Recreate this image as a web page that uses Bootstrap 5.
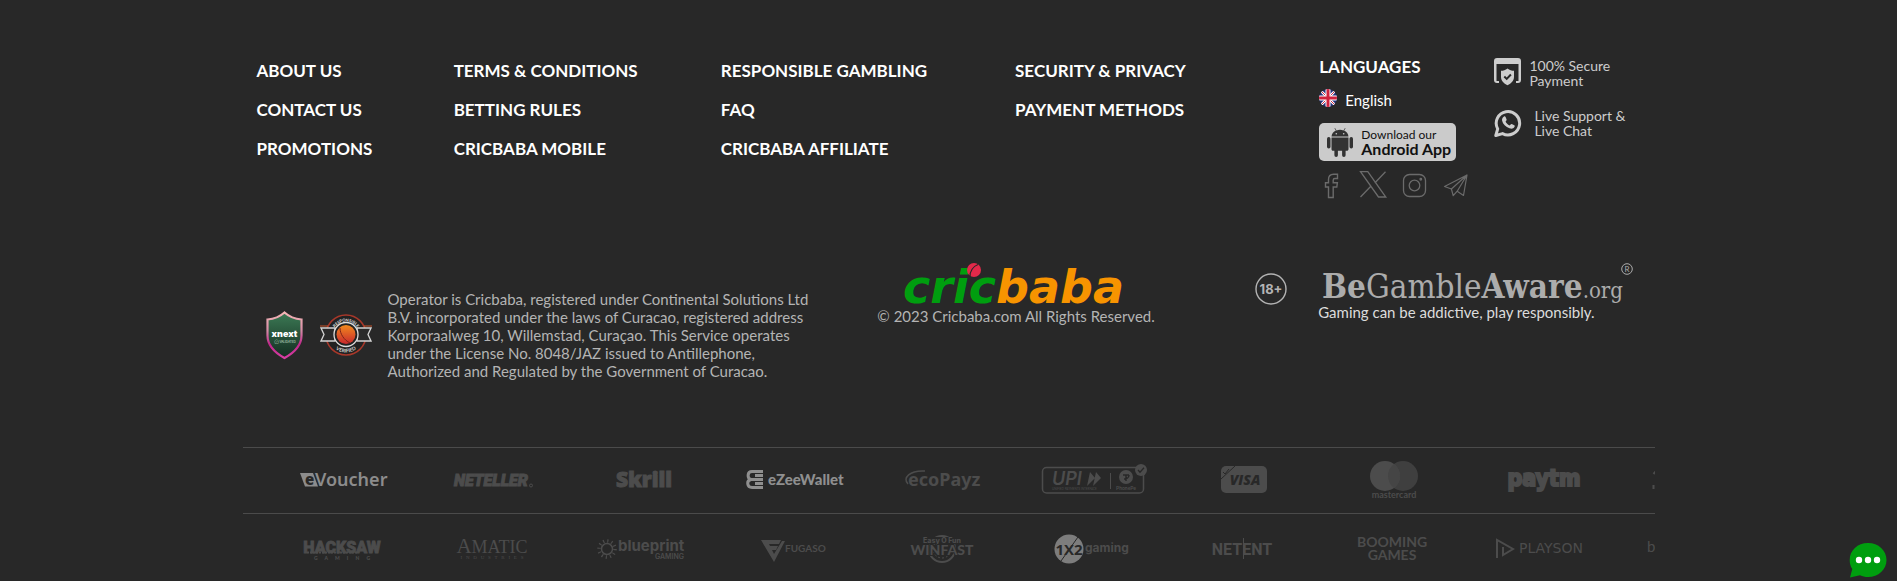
<!DOCTYPE html>
<html lang="en">
<head>
<meta charset="utf-8">
<meta name="viewport" content="width=device-width, initial-scale=1">
<title>Cricbaba</title>
<link href="https://cdn.jsdelivr.net/npm/bootstrap@5.3.0/dist/css/bootstrap.min.css" rel="stylesheet">
<style>
  body { background: #282828; color: #b4b4b4; font-family: Lato, "Open Sans", sans-serif; font-size: 15px; line-height: 18px; }
  a { color: inherit; text-decoration: none; }
  a:hover { color: #f79400; }
  .site-footer { max-width: 1412px; }
  .footer-top { display: grid; grid-template-columns: 197fr 267fr 294fr 304fr 175fr 146fr; padding: 51px 14px 0; }
  .footer-links { color: #fff; font-size: 17px; font-weight: 700; line-height: 39px; }
  .lang-title { color: #fff; font-size: 17px; font-weight: 700; line-height: 32px; }
  .lang-btn { color: #fff; font-size: 15px; line-height: 20px; margin-top: 6px; }
  .app-btn { background: #cbcbcb; color: #111; border-radius: 5px; width: 137px; height: 38px; margin-top: 12px; }
  .app-btn small { font: 12px/12px Lato, sans-serif; }
  .app-btn strong { font: 700 16px/15px Lato, sans-serif; }
  .social { color: #6b6b6b; margin-top: 9px; }
  .perks { color: #cdcdcd; font-size: 14px; line-height: 15px; padding-top: 7px; }
  .perk-chat { margin-top: 20px; }
  .footer-mid { display: grid; grid-template-columns: 563fr 392fr 428fr; padding: 0 14px; margin-top: 63px; }
  .licence { padding: 27px 0 0 8px; }
  .licence p { width: 430px; }
  .aware { padding-left: 42px; gap: 30px; }
  .aware-note { color: #dcdcdc; }
  .logo-strip { border-top: 1px solid #4b4b4b; padding-left: 26px; color: #4c4c4c; height: 66px; }
  .logo-strip svg { flex: 0 0 150px; }
  .strip-first { margin-top: 67px; }
  .chat-btn { right: 10px; bottom: 3px; }
  .f-open { font-family: "Open Sans", sans-serif; }
  .f-noto { font-family: "Noto Sans", sans-serif; }
  .f-inter { font-family: Inter, sans-serif; }
  .f-lato { font-family: Lato, sans-serif; }
  .f-roboto { font-family: Roboto, sans-serif; }
  .f-dejavu { font-family: "DejaVu Sans", sans-serif; }
  .f-cond { font-family: "DejaVu Sans Condensed", "DejaVu Sans", sans-serif; }
  .f-slab { font-family: "DejaVu Serif Condensed", "DejaVu Serif", serif; }
  .f-serif { font-family: "Liberation Serif", serif; }
</style>
</head>
<body>
<footer class="site-footer mx-auto">

  <div class="footer-top">
    <ul class="footer-links list-unstyled mb-0">
      <li><a href="#">ABOUT US</a></li>
      <li><a href="#">CONTACT US</a></li>
      <li><a href="#">PROMOTIONS</a></li>
    </ul>
    <ul class="footer-links list-unstyled mb-0">
      <li><a href="#">TERMS &amp; CONDITIONS</a></li>
      <li><a href="#">BETTING RULES</a></li>
      <li><a href="#">CRICBABA MOBILE</a></li>
    </ul>
    <ul class="footer-links list-unstyled mb-0">
      <li><a href="#">RESPONSIBLE GAMBLING</a></li>
      <li><a href="#">FAQ</a></li>
      <li><a href="#">CRICBABA AFFILIATE</a></li>
    </ul>
    <ul class="footer-links list-unstyled mb-0">
      <li><a href="#">SECURITY &amp; PRIVACY</a></li>
      <li><a href="#">PAYMENT METHODS</a></li>
    </ul>

    <div>
      <div class="lang-title">LANGUAGES</div>
      <button type="button" class="lang-btn btn p-0 border-0 d-flex align-items-center">
        <svg width="18" height="18" viewBox="0 0 18 18" class="me-2 mb-1" aria-hidden="true">
          <clipPath id="round"><circle cx="9" cy="9" r="9"/></clipPath>
          <g clip-path="url(#round)">
            <path fill="#22307c" d="M0 0h18v18H0z"/>
            <path stroke="#fff" stroke-width="2.600" d="M0 0l18 18M18 0L0 18"/>
            <path stroke="#d02a45" stroke-width="1" d="M0 0l18 18M18 0L0 18"/>
            <path stroke="#fff" stroke-width="5" d="M9 0v18M0 9h18"/>
            <path stroke="#d0213d" stroke-width="3" d="M9 0v18M0 9h18"/>
          </g>
        </svg>
        English
      </button>
      <a href="#" class="app-btn d-flex align-items-center">
        <svg width="26" height="29" viewBox="0 0 26 29" class="ms-2 me-2" fill="#333" aria-hidden="true">
          <path d="M4.5 8.6C4.7 5.6 6.600 3.600 8.900 2.600L7.500.4l.5-.3 1.500 2.300a10 10 0 0 1 7 0L18 .1l.5.3-1.400 2.200c2.300 1 4.200 3 4.400 6z"/>
          <rect y="9" width="3.500" height="11.500" rx="1.700"/><rect x="22.500" y="9" width="3.500" height="11.500" rx="1.700"/>
          <path d="M4.500 9.500h17v11.700c0 .9-.7 1.500-1.500 1.500h-1.400v4.500a1.700 1.700 0 0 1-3.500 0v-4.500h-4.200v4.500a1.700 1.700 0 0 1-3.500 0v-4.500H6c-.9 0-1.500-.7-1.500-1.500z"/>
          <circle cx="9.300" cy="5.700" r=".8" fill="#cbcbcb"/><circle cx="16.700" cy="5.700" r=".8" fill="#cbcbcb"/>
        </svg>
        <span class="d-flex flex-column"><small>Download our</small><strong>Android App</strong></span>
      </a>
      <div class="social d-flex align-items-center">
        <a href="#" aria-label="Facebook"><svg class="d-block" width="36" height="30" viewBox="0 0 36 30" fill="none" stroke="currentColor" stroke-width="1.400"><path d="M9.500 27.500V17H6.500v-4.300h3V9.500c0-3.200 2-5.300 5-5.300h4v4.300h-2.600c-1.200 0-1.700.7-1.700 1.700v2.500h4.200l-.6 4.300h-3.600v10.500z"/></svg></a>
        <a href="#" aria-label="X"><svg class="d-block" width="42" height="30" viewBox="0 0 42 30" fill="none" stroke="currentColor" stroke-width="1.300"><path d="M5.500 1.700h7.300l18 25.300h-7.300zM30.500 1.700L19.800 13M16.300 15.800L5.500 27"/></svg></a>
        <a href="#" aria-label="Instagram"><svg class="d-block" width="42" height="30" viewBox="0 0 42 30" fill="none" stroke="currentColor" stroke-width="1.300"><rect x="6.500" y="4.500" width="22" height="22" rx="6"/><circle cx="17.500" cy="15.500" r="5.300"/><circle cx="23.800" cy="9.200" r=".8"/></svg></a>
        <a href="#" aria-label="Telegram"><svg class="d-block" width="32" height="30" viewBox="0 0 32 30" fill="none" stroke="currentColor" stroke-width="1.200" stroke-linejoin="round"><path d="M5.500 16.500L28 5l-3.500 20.500-6.300-4.300-4 4.500-1.800-6.700zM28 5L12.400 19M28 5l-9.800 16.200"/></svg></a>
      </div>
    </div>

    <div class="perks">
      <div class="d-flex">
        <svg width="27" height="28" viewBox="0 0 27 28" class="me-2" fill="#cdcdcd" aria-hidden="true">
          <path d="M3 0h21a3 3 0 0 1 3 3v19a3 3 0 0 1-3 3h-2v-2h2.500V6h-22v17H5v2H3a3 3 0 0 1-3-3V3a3 3 0 0 1 3-3z"/>
          <path d="M13.500 10.500c2 1.600 4.200 2.300 6.500 2.300v6c0 4-2.700 6.500-6.500 8.500-3.800-2-6.500-4.500-6.500-8.500v-6c2.300 0 4.500-.7 6.500-2.300z"/>
          <path fill="none" stroke="#282828" stroke-width="2" d="M10.300 18.500l2.400 2.400 4.200-4.400"/>
        </svg>
        <span>100% Secure<br>Payment</span>
      </div>
      <div class="perk-chat d-flex align-items-center">
        <svg width="28" height="28" viewBox="0 0 28 28" class="me-2" aria-hidden="true">
          <path fill="none" stroke="#cdcdcd" stroke-width="3" stroke-linejoin="round" d="M1.800 26.500l1.900-6.600A11.700 11.700 0 1 1 8.500 24.600z"/>
          <path fill="#cdcdcd" d="M9.700 7.700c.8-.6 1.500-.4 1.900.4l1 2.300c.2.600-.5 1.500-1.100 2.200.9 1.800 2.200 3 4.100 3.900.8-.7 1.500-1.800 2.200-1.500l2.400 1.200c.7.300.7 1 .2 1.800-1 1.700-2.900 2-4.900 1.300-3.800-1.300-6.600-4.300-7.400-7.600-.3-1.700.3-3.200 1.600-4z"/>
        </svg>
        <span class="ms-1 text-nowrap">Live Support &amp;<br>Live Chat</span>
      </div>
    </div>
  </div>

  <div class="footer-mid">
    <div class="licence d-flex align-items-center">
      <svg width="39" height="50" viewBox="0 0 39 50" class="me-3 flex-shrink-0" role="img" aria-label="xnext shield">
        <defs>
          <linearGradient id="rim" x1="0" y1="0" x2="0" y2="1"><stop offset="0" stop-color="#f3b5b5"/><stop offset=".4" stop-color="#d58aa6"/><stop offset=".7" stop-color="#c0268a"/><stop offset="1" stop-color="#d640a4"/></linearGradient>
          <linearGradient id="felt" x1="0" y1="0" x2="0" y2="1"><stop offset="0" stop-color="#3c7a55"/><stop offset="1" stop-color="#132c20"/></linearGradient>
        </defs>
        <path fill="url(#felt)" stroke="url(#rim)" stroke-width="2.200" d="M19.500 2.500c5 4.500 11 6.500 17 7v16c0 10-7 17-17 22.500-10-5.500-17-12.500-17-22.500v-16c6-.5 12-2.500 17-7z"/>
        <text x="19.500" y="27" text-anchor="middle" class="f-inter" font-size="9" font-weight="900" fill="#fff">xnext</text>
        <text x="20" y="33" text-anchor="middle" class="f-inter" font-size="3" fill="#cfe0d6">⊘ VALIDATED</text>
      </svg>
      <svg width="52" height="44" viewBox="0 0 52 44" class="me-3 flex-shrink-0" role="img" aria-label="Verified seal">
        <defs>
          <linearGradient id="fire" x1="0" y1="0" x2="0" y2="1"><stop offset="0" stop-color="#f28a1e"/><stop offset="1" stop-color="#c8282d"/></linearGradient>
          <path id="arcTop" d="M12.500 22a13.500 13.500 0 0 1 27 0"/>
          <path id="arcBottom" d="M8.500 22a17.500 17.500 0 0 0 35 0"/>
        </defs>
        <circle cx="26" cy="22" r="20" fill="#222" stroke="#a8382a" stroke-width="1.500"/>
        <path fill="#2a2a2a" stroke="#d4d4d4" stroke-width="1.300" d="M1 15h14v13H1l3-6.500zM51 15H37v13h14l-3-6.500z"/>
        <path stroke="#c9542a" stroke-width="1" d="M0 13h8M44 13h8"/>
        <circle cx="26" cy="21.500" r="12" fill="#222" stroke="#ddd" stroke-width="1.300"/>
        <circle cx="26" cy="21.500" r="9.500" fill="url(#fire)"/>
        <path stroke="#7c2318" stroke-width="1" fill="none" d="M20 15c0 6 4 12 10 15"/>
        <text font-size="4" font-weight="700" fill="#e8e8e8" class="f-lato"><textPath href="#arcTop" startOffset="50%" text-anchor="middle">RESPONSIBLE</textPath></text>
        <text font-size="5" font-weight="700" fill="#d8d8d8" class="f-lato"><textPath href="#arcBottom" startOffset="50%" text-anchor="middle">VERIFIED</textPath></text>
      </svg>
      <p class="mb-0 flex-shrink-0">Operator is Cricbaba, registered under Continental Solutions Ltd<br>B.V. incorporated under the laws of Curacao, registered address<br>Korporaalweg 10, Willemstad, Curaçao. This Service operates<br>under the License No. 8048/JAZ issued to Antillephone,<br>Authorized and Regulated by the Government of Curacao.</p>
    </div>

    <div class="text-center">
      <svg width="240" height="44" viewBox="0 0 240 44" class="d-block mx-auto overflow-visible" role="img" aria-label="cricbaba">
        <text x="7" y="40" class="f-dejavu" font-size="46" font-weight="700" font-style="italic"><tspan fill="#009e0f">cric</tspan><tspan fill="#f79400">baba</tspan></text>
        <circle cx="78" cy="7" r="7" fill="#e3294a"/>
        <path d="M74 13.500c0-5 3-10 8-12" fill="none" stroke="#282828" stroke-width="1.300"/>
      </svg>
      <div>© 2023 Cricbaba.com All Rights Reserved.</div>
    </div>

    <div class="aware d-flex">
      <svg width="34" height="34" viewBox="0 0 34 34" class="mt-2" role="img" aria-label="18+">
        <circle cx="17" cy="18" r="15" fill="none" stroke="#b4b4b4" stroke-width="1.400"/>
        <text x="17" y="23" text-anchor="middle" class="f-inter" font-size="13" font-weight="700" fill="#b4b4b4">18+</text>
      </svg>
      <div>
        <svg width="322" height="40" viewBox="0 0 322 40" class="d-block overflow-visible" fill="#acacac" role="img" aria-label="BeGambleAware.org">
          <text x="4" y="35" class="f-slab" font-size="33"><tspan font-weight="700">Be</tspan>Gamble<tspan font-weight="700">Aware</tspan><tspan font-size="22">.org</tspan></text>
          <circle cx="309" cy="6" r="5.300" fill="none" stroke="#acacac"/>
          <text x="309" y="9" text-anchor="middle" class="f-lato" font-size="8">R</text>
        </svg>
        <div class="aware-note">Gaming can be addictive, play responsibly.</div>
      </div>
    </div>
  </div>

  <div class="logo-strip strip-first d-flex overflow-hidden">
    <svg width="150" height="65" fill="#8c8c8c"><path d="M31 25h13l5 13.500H36z"/><text x="36" y="37" class="f-open" font-size="15" font-weight="800" fill="#282828">e</text><text x="46" y="38" class="f-noto" font-size="18" font-weight="600">Voucher</text></svg>
    <svg width="150" height="65" fill="currentColor"><text x="35" y="38" class="f-roboto" font-size="16" font-weight="900" font-style="italic" stroke="currentColor">NETELLER</text><circle cx="112" cy="37.500" r="1.500" fill="none" stroke="currentColor"/></svg>
    <svg width="150" height="65" fill="currentColor"><text x="75" y="39" text-anchor="middle" class="f-noto" font-size="21" font-weight="900" stroke="currentColor">Skrill</text></svg>
    <svg width="150" height="65" fill="#8f8f8f"><path fill="none" stroke="#8f8f8f" stroke-width="3" d="M44 23.500H33c-5 0-5 7-1 8h12M32 31.500c-5 1-4 8 1 8h11M36 27.500h8M36 35.500h8"/><text x="49" y="37" class="f-lato" font-size="15" font-weight="900">eZeeWallet</text></svg>
    <svg width="150" height="65" fill="currentColor"><path d="M39 36c-6-6 2-14 17-13" fill="none" stroke="currentColor" stroke-width="1.500"/><text x="39" y="38" class="f-noto" font-size="18" font-weight="700">ecoPayz</text></svg>
    <svg width="150" height="65" fill="none" stroke="currentColor"><rect x="23.500" y="19.500" width="101" height="25.500" rx="4" stroke-width="1.500"/><text x="33" y="37" class="f-inter" font-size="18" font-style="italic" font-weight="600" stroke="none" fill="currentColor">UPI</text><path fill="currentColor" stroke="none" d="M77 24l5 6-8 8zM71 24l5 6-8 8z"/><path d="M91.500 25v16"/><circle cx="107" cy="29" r="7" fill="currentColor" stroke="none"/><path stroke="#282828" stroke-width="1.500" d="M104 27h6M107 27v6M110 27c0 3-3 4-5 4"/><text x="33" y="42" class="f-lato" font-size="3" stroke="none" fill="currentColor">UNIFIED PAYMENTS INTERFACE</text><text x="107" y="42" text-anchor="middle" class="f-lato" font-size="5" font-weight="700" stroke="none" fill="currentColor">PhonePe</text><circle cx="122" cy="22" r="6" fill="currentColor" stroke="none"/><path stroke="#282828" stroke-width="1.300" d="M119 22l2 2.200 4-4.400"/></svg>
    <svg width="150" height="65" fill="currentColor"><rect x="52" y="18" width="46" height="27" rx="5"/><path fill="none" stroke="#282828" d="M52 31l14-13M54 24l2 2 4-5"/><text x="76" y="37" text-anchor="middle" class="f-open" font-size="14" font-weight="800" font-style="italic" fill="#282828">VISA</text></svg>
    <svg width="150" height="65" fill="currentColor"><circle cx="84" cy="28" r="15" fill="#3f3f3f"/><circle cx="66" cy="28" r="15"/><path fill="#454545" d="M75 16a15 15 0 0 1 0 24 15 15 0 0 1 0-24z"/><text x="75" y="50" text-anchor="middle" class="f-lato" font-size="9" font-weight="700">mastercard</text></svg>
    <svg width="150" height="65" fill="currentColor"><text x="75" y="38" text-anchor="middle" class="f-cond" font-size="23" font-weight="700" stroke="currentColor" stroke-width="2">paytm</text></svg>
    <svg width="150" height="65" fill="none" stroke="currentColor" stroke-width="2"><path d="M37 23l-2.500 3M34.500 37v4"/></svg>
  </div>

  <div class="logo-strip d-flex overflow-hidden">
    <svg width="150" height="65" fill="currentColor"><text x="73" y="39" text-anchor="middle" class="f-roboto" font-size="16" font-weight="900" stroke="currentColor" stroke-width=".8">HACKSAW</text><path stroke="currentColor" stroke-width="2" stroke-dasharray="2 1" d="M38 38.500h50"/><text x="73" y="46" text-anchor="middle" class="f-lato" font-size="5" font-weight="900">G&#160;&#160;&#160;&#160;&#160;&#160;A&#160;&#160;&#160;&#160;&#160;&#160;M&#160;&#160;&#160;&#160;&#160;&#160;I&#160;&#160;&#160;&#160;&#160;&#160;N&#160;&#160;&#160;&#160;&#160;&#160;G</text></svg>
    <svg width="150" height="65" fill="currentColor"><text x="73" y="39" text-anchor="middle" class="f-serif" font-size="18"><tspan font-size="21">A</tspan>MATIC</text><text x="73" y="45" text-anchor="middle" class="f-serif" font-size="5">I&#160;&#160;&#160;N&#160;&#160;&#160;D&#160;&#160;&#160;U&#160;&#160;&#160;S&#160;&#160;&#160;T&#160;&#160;&#160;R&#160;&#160;&#160;I&#160;&#160;&#160;E&#160;&#160;&#160;S</text></svg>
    <svg width="150" height="65" fill="currentColor"><circle cx="38" cy="35" r="5.500" fill="none" stroke="currentColor" stroke-width="1.500"/><circle cx="38" cy="35" r="8" fill="none" stroke="currentColor" stroke-width="3.500" stroke-dasharray="1.200 2.990"/><text x="49" y="37" class="f-inter" font-size="15" font-weight="700">blueprint</text><text x="115" y="45" text-anchor="end" class="f-inter" font-size="7" font-weight="600">GAMING</text></svg>
    <svg width="150" height="65" fill="currentColor"><path d="M42 26h20l-2 4H50l1 2h8l-2 4h-4l2 4 8-13h3L55 48z"/><text x="66" y="38" class="f-lato" font-size="10" font-weight="700">FUGASO</text></svg>
    <svg width="150" height="65" fill="currentColor"><circle cx="73" cy="35" r="13" fill="none" stroke="currentColor" stroke-width="2"/><circle cx="73" cy="35" r="9" fill="none" stroke="currentColor" stroke-dasharray="2 2"/><path fill="#282828" d="M55 23h36v7H55z"/><text x="73" y="29" text-anchor="middle" class="f-inter" font-size="7" font-weight="800">Easy O Fun</text><text x="73" y="41" text-anchor="middle" class="f-lato" font-size="14" font-weight="900" stroke="#282828" stroke-width="2" paint-order="stroke">WINFAST</text></svg>
    <svg width="150" height="65" fill="currentColor"><circle cx="50" cy="35" r="14.500" fill="#7d7d7d"/><text x="50" y="41" text-anchor="middle" class="f-open" font-size="15" font-weight="700" fill="#282828">1X2</text><path stroke="#282828" d="M42 47l17-24"/><text x="66" y="38" class="f-inter" font-size="12" font-weight="700">gaming</text></svg>
    <svg width="150" height="65" fill="currentColor"><text x="73" y="41" text-anchor="middle" class="f-roboto" font-size="16" font-weight="700">NETENT</text><path stroke="currentColor" d="M74.500 24v21"/></svg>
    <svg width="150" height="65" fill="currentColor"><text x="73" y="33" text-anchor="middle" class="f-lato" font-size="14" font-weight="700">BOOMING</text><text x="73" y="46" text-anchor="middle" class="f-lato" font-size="14" font-weight="700">GAMES</text></svg>
    <svg width="150" height="65" fill="currentColor"><path fill="none" stroke="currentColor" stroke-width="2" d="M28 44V26l16 9-10 6v-8"/><text x="50" y="39" class="f-dejavu" font-size="14">PLAYSON</text></svg>
    <svg width="150" height="65" fill="currentColor"><text x="28" y="38" class="f-lato" font-size="15">betsoft</text></svg>
  </div>
</footer>

<button type="button" class="chat-btn btn p-0 border-0 position-fixed" aria-label="Open chat">
  <svg class="d-block" width="38" height="36" viewBox="0 0 38 36"><path fill="#009e0f" d="M19 1c10.500 0 18.500 7.400 18.500 17S29.500 35 19 35c-3 0-5.500-.6-8-1.800L1 35.500l2.300-8.500C1.500 24.300.7 21.300.7 18 .7 8.400 8.500 1 19 1z"/><g fill="#fff"><circle cx="10" cy="18" r="3.200"/><circle cx="19" cy="18" r="3.200"/><circle cx="28" cy="18" r="3.200"/></g></svg>
</button>
<script src="https://cdn.jsdelivr.net/npm/bootstrap@5.3.0/dist/js/bootstrap.bundle.min.js"></script>
</body>
</html>
